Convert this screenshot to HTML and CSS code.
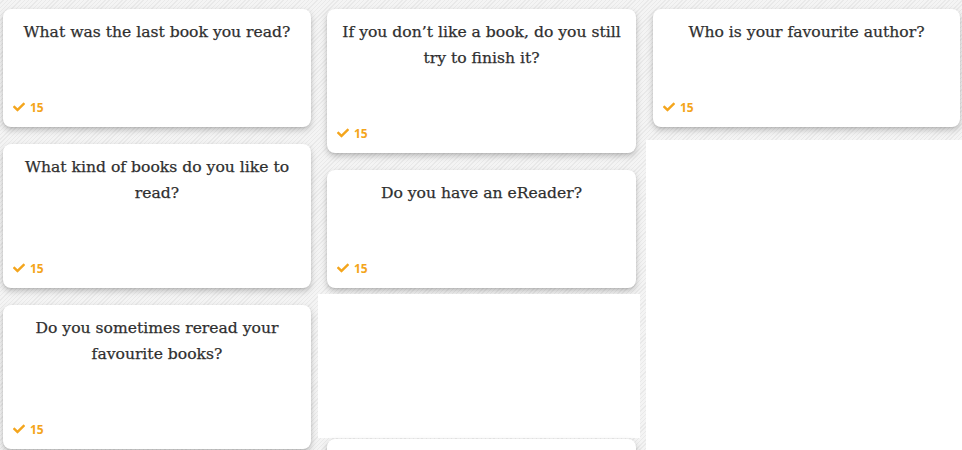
FILE: index.html
```html
<!DOCTYPE html>
<html lang="en">
<head>
<meta charset="utf-8">
<title>Book questions</title>
<link rel="stylesheet" href="styles.css">
</head>
<body>
<main class="board">
  <div class="col">
    <article class="card">
      <h2 class="q">What was the last book you read?</h2>
      <div class="meta"><svg class="tick" viewBox="0 0 512 512"><path d="M173.9 439.4l-166.4-166.4c-10-10-10-26.2 0-36.2l36.2-36.2c10-10 26.2-10 36.2 0L192 312.7 432.1 72.6c10-10 26.2-10 36.2 0l36.2 36.2c10 10 10 26.2 0 36.2l-294.4 294.4c-10 10-26.2 10-36.2 0z"/></svg><span>15</span></div>
    </article>
    <article class="card">
      <h2 class="q">What kind of books do you like to read?</h2>
      <div class="meta"><svg class="tick" viewBox="0 0 512 512"><path d="M173.9 439.4l-166.4-166.4c-10-10-10-26.2 0-36.2l36.2-36.2c10-10 26.2-10 36.2 0L192 312.7 432.1 72.6c10-10 26.2-10 36.2 0l36.2 36.2c10 10 10 26.2 0 36.2l-294.4 294.4c-10 10-26.2 10-36.2 0z"/></svg><span>15</span></div>
    </article>
    <article class="card">
      <h2 class="q">Do you sometimes reread your favourite books?</h2>
      <div class="meta"><svg class="tick" viewBox="0 0 512 512"><path d="M173.9 439.4l-166.4-166.4c-10-10-10-26.2 0-36.2l36.2-36.2c10-10 26.2-10 36.2 0L192 312.7 432.1 72.6c10-10 26.2-10 36.2 0l36.2 36.2c10 10 10 26.2 0 36.2l-294.4 294.4c-10 10-26.2 10-36.2 0z"/></svg><span>15</span></div>
    </article>
  </div>
  <div class="col">
    <article class="card">
      <h2 class="q">If you don’t like a book, do you still try to finish it?</h2>
      <div class="meta"><svg class="tick" viewBox="0 0 512 512"><path d="M173.9 439.4l-166.4-166.4c-10-10-10-26.2 0-36.2l36.2-36.2c10-10 26.2-10 36.2 0L192 312.7 432.1 72.6c10-10 26.2-10 36.2 0l36.2 36.2c10 10 10 26.2 0 36.2l-294.4 294.4c-10 10-26.2 10-36.2 0z"/></svg><span>15</span></div>
    </article>
    <article class="card">
      <h2 class="q">Do you have an eReader?</h2>
      <div class="meta"><svg class="tick" viewBox="0 0 512 512"><path d="M173.9 439.4l-166.4-166.4c-10-10-10-26.2 0-36.2l36.2-36.2c10-10 26.2-10 36.2 0L192 312.7 432.1 72.6c10-10 26.2-10 36.2 0l36.2 36.2c10 10 10 26.2 0 36.2l-294.4 294.4c-10 10-26.2 10-36.2 0z"/></svg><span>15</span></div>
    </article>
    <div class="blank blank-mid"></div>
    <article class="card card-empty"></article>
  </div>
  <div class="col">
    <article class="card">
      <h2 class="q">Who is your favourite author?</h2>
      <div class="meta"><svg class="tick" viewBox="0 0 512 512"><path d="M173.9 439.4l-166.4-166.4c-10-10-10-26.2 0-36.2l36.2-36.2c10-10 26.2-10 36.2 0L192 312.7 432.1 72.6c10-10 26.2-10 36.2 0l36.2 36.2c10 10 10 26.2 0 36.2l-294.4 294.4c-10 10-26.2 10-36.2 0z"/></svg><span>15</span></div>
    </article>
    <div class="blank blank-side"></div>
  </div>
</main>
</body>
</html>
```

FILE: styles.css
```css
html {
  overflow: hidden;
}
body {
  margin: 0;
  background-color: #f2f2f2;
  background-image: repeating-linear-gradient(135deg, #f4f4f4 0 2px, #e9e9e9 2px 3px);
  font-family: "DejaVu Serif", serif;
}
.board {
  display: grid;
  grid-template-columns: 308px 309px 308px;
  column-gap: 16px;
  padding: 9px 0 0 3px;
  align-items: stretch;
}
.col {
  display: flex;
  flex-direction: column;
  gap: 17px;
}
.col:last-child {
  margin-left: 1px;
}
.card {
  background: #fff;
  border-radius: 8px;
  box-shadow: 0 3px 6px rgba(0, 0, 0, 0.22), 0 1px 2px rgba(0, 0, 0, 0.08);
  padding: 10px 12px 12px;
  display: flex;
  flex-direction: column;
}
.card-empty {
  min-height: 118px;
}
.q {
  margin: 0 0 54px;
  font-size: 15.6px;
  font-weight: normal;
  line-height: 26px;
  color: #2f2f2f;
  text-align: center;
  -webkit-text-stroke: 0.25px #2f2f2f;
}
.meta {
  display: flex;
  align-items: center;
  gap: 5px;
  height: 16px;
  margin-left: -2px;
  color: #f4a51c;
  font-family: "Noto Sans", sans-serif;
  font-weight: 700;
  font-size: 12px;
}
.tick {
  width: 12px;
  height: 12px;
  fill: #f4a51c;
}
.blank {
  background: #fff;
}
.blank-mid {
  height: 144px;
  margin: -11px -4px -16px -9px;
}
.blank-side {
  flex: 1;
  min-height: 400px;
  margin: -4px -10px 0 -7px;
}
```
